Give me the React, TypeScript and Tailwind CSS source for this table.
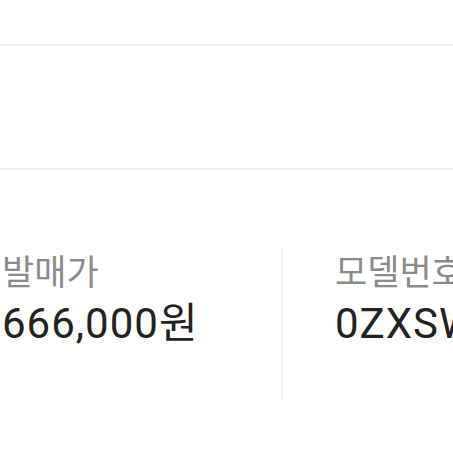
export default function App() {
  return (
    <div className="w-[453px] h-[453px] bg-white overflow-hidden relative" style={{ fontFamily: '"Noto Sans CJK KR", "Noto Sans", sans-serif' }}>
      <div className="h-[44px]" />
      <div className="h-[2px] bg-[#ececec]" />
      <div className="h-[122px]" />
      <div className="h-[2px] bg-[#ececec]" />
      <div className="flex mt-[78px] h-[152px]">
        <div className="w-[281px] shrink-0 pl-[2px] flex flex-col">
          <div className="text-[35px] leading-[40px] text-[#8a8a8a] mt-[2px] whitespace-nowrap">발매가</div>
          <div className="text-[42px] leading-[44px] tracking-[1px] text-[#222222] mt-[12px] whitespace-nowrap" style={{ fontFamily: 'Roboto, "Noto Sans CJK KR", sans-serif' }}>666,000원</div>
        </div>
        <div className="w-[2px] shrink-0 bg-[#f1f1f1]" />
        <div className="pl-[52px] flex flex-col whitespace-nowrap">
          <div className="text-[35px] leading-[40px] text-[#8a8a8a] mt-[2px]">모델번호</div>
          <div className="text-[42px] leading-[44px] tracking-[1px] text-[#222222] mt-[12px]" style={{ fontFamily: 'Roboto, "Noto Sans CJK KR", sans-serif' }}>0ZXSW9</div>
        </div>
      </div>
    </div>
  );
}
